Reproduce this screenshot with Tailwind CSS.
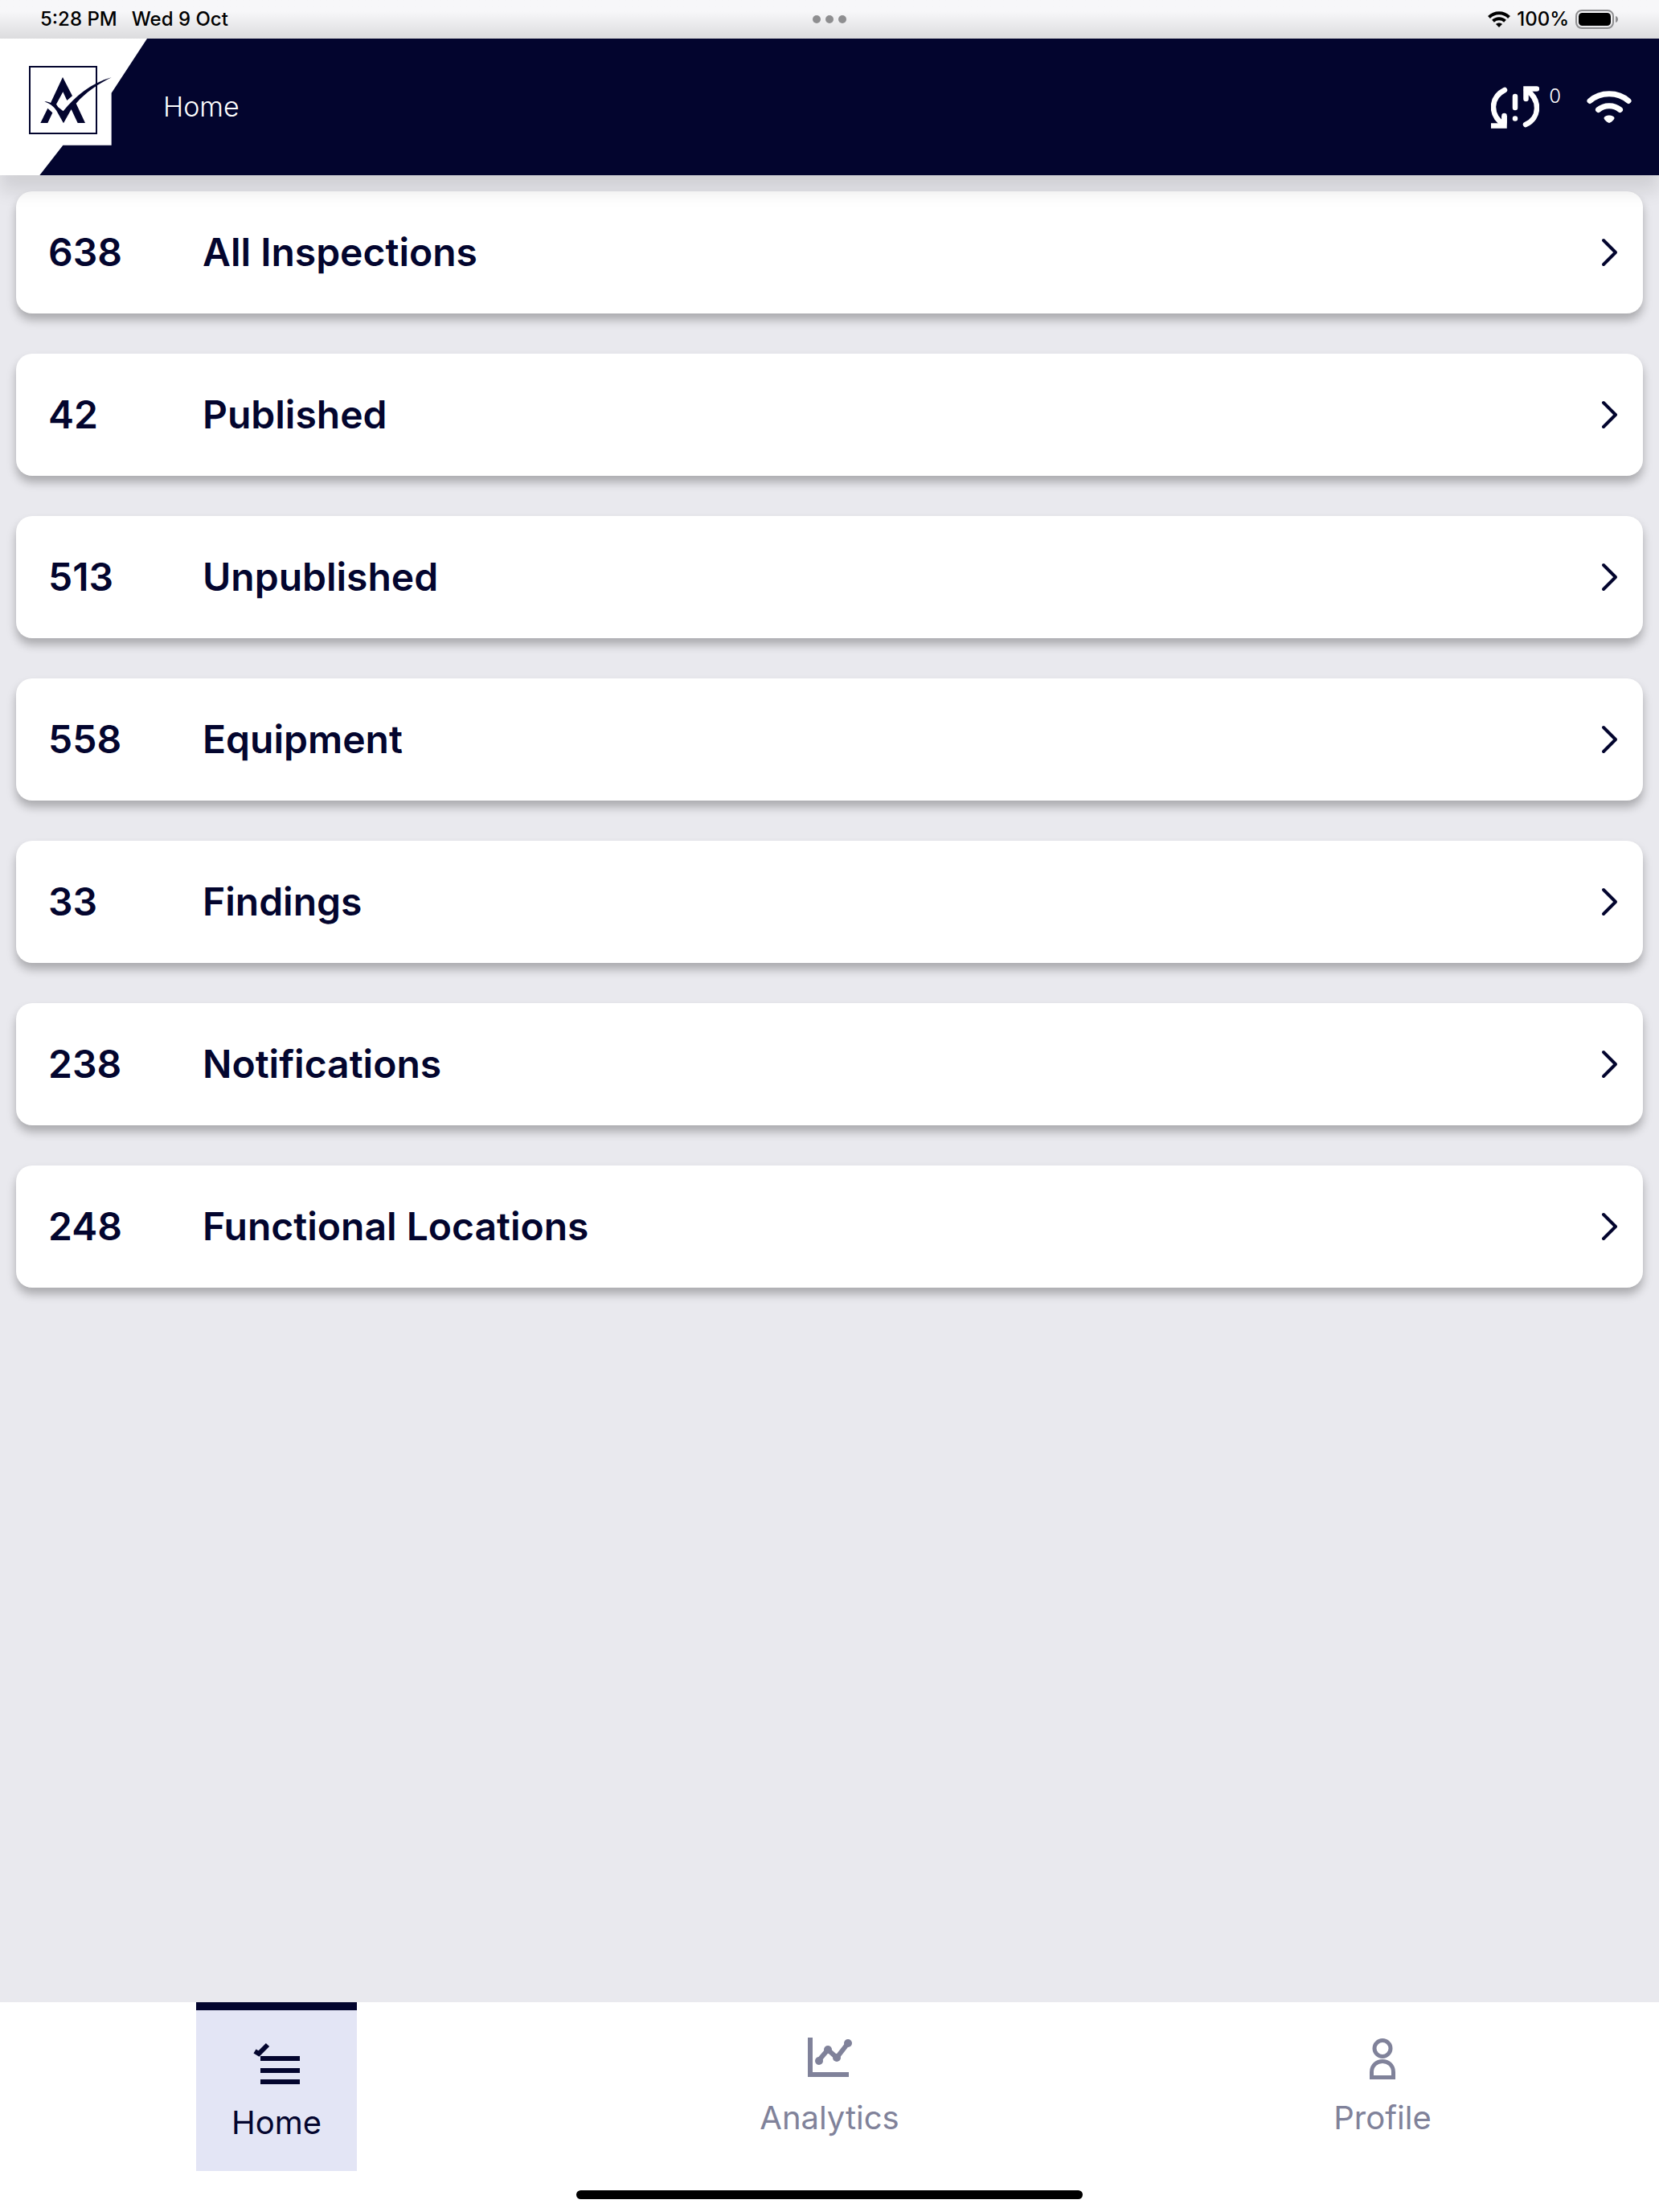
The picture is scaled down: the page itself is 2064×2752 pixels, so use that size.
<!DOCTYPE html>
<html lang="en">
<head>
    <meta charset="UTF-8">
    <meta name="viewport" content="width=device-width, initial-scale=1.0">
    <title>Home</title>
    <script src="https://cdn.jsdelivr.net/npm/@tailwindcss/browser@4"></script>
</head>
<body class="flex min-h-screen flex-col bg-[#e9e9ee] font-['Inter',sans-serif] text-[#03052e]">

    <!-- Status bar -->
    <div class="grid h-12 grid-cols-3 items-center bg-linear-to-b from-[#f7f7f9] from-30% to-[#dcdcde] px-[50px] text-2xl font-medium text-black">
        <div class="flex gap-[18px]">
            <span>5:28 PM</span>
            <span>Wed 9 Oct</span>
        </div>
        <div class="flex justify-center gap-1.5">
            <span class="size-2.5 rounded-full bg-[#8e8e90]"></span>
            <span class="size-2.5 rounded-full bg-[#8e8e90]"></span>
            <span class="size-2.5 rounded-full bg-[#8e8e90]"></span>
        </div>
        <div class="flex items-center justify-end gap-2">
            <svg class="h-5 w-7" viewBox="0 0 28 20" fill="none" stroke="black" stroke-width="4">
                <path d="M1.5 7.5C8.5 .5 19.5 .5 26.5 7.5M6.500 12.200C10.700 8.200 17.300 8.200 21.500 12.200"/>
                <path d="M10 16C12.300 14 15.700 14 18 16L14 20Z" fill="black" stroke="none"/>
            </svg>
            <span>100%</span>
            <svg class="h-6 w-[54px]" viewBox="0 0 54 24">
                <rect x="1" y="1" width="46" height="22" rx="7" fill="none" stroke="#8e8e90" stroke-width="2"/>
                <rect x="4" y="4" width="40" height="16" rx="4.500" fill="black"/>
                <path d="M50 8C54 9 54 15 50 16Z" fill="#8e8e90"/>
            </svg>
        </div>
    </div>

    <!-- Header -->
    <header class="relative z-10 flex h-[170px] items-center bg-[#03052e] pr-[34px] text-white shadow-[0_20px_20px_rgba(0,0,0,0.1)]">
        <svg class="h-[170px] w-[183px]" viewBox="0 144 549 510">
            <path d="M0 144H549L416 347V542H235L148 654H0Z" fill="white"/>
            <rect x="111" y="249" width="249" height="249" fill="none" stroke="#03052e" stroke-width="6"/>
            <g fill="#03052e">
                <path d="M234 288L270 358L250 375L235 343L210 389L217 400L236 415C280 360 340 310 416 289C365 314 320 345 284 386L318 459H290L266 408L237 460L211 413C200 397 188 388 166 379C174 379 182 381 189 384Z"/>
                <path d="M178 404L196 421L178 459H151Z"/>
            </g>
        </svg>
        <h1 class="ml-5 text-[34px] leading-10 font-light">Home</h1>
        <div class="ml-auto flex items-center">
            <button type="button" class="flex items-start" aria-label="Sync">
                <svg class="h-[54px] w-[60px]" viewBox="0 0 60 54" fill="none" stroke="white" stroke-width="6.500" stroke-linecap="round">
                    <path d="M17 6C-1 15 -2 37 16 49"/>
                    <path d="M16.500 38V50.500H0" stroke-linecap="butt"/>
                    <path d="M16.500 38V46"/>
                    <path d="M43 49C61 41 62 18 44 6"/>
                    <path d="M43.500 17V4.500H57"/>
                    <path d="M30 14V28M30 41.500V41.600"/>
                </svg>
                <span class="ml-3 text-2xl leading-7 font-light">0</span>
            </button>
            <svg class="ml-8 h-10 w-14" viewBox="0 0 56 40" fill="none" stroke="white" stroke-width="7" stroke-linecap="round">
                <path d="M4 12.500C17 .7 39 .7 52 12.500M14.500 23.500C22 17 34 17 41.500 23.500"/>
                <path d="M28 30.500C31 30.500 34.500 32 34.500 34C34.500 36 29.500 40 28 40S21.500 36 21.500 34C21.500 32 25 30.500 28 30.500Z" fill="white" stroke="none"/>
            </svg>
        </div>
    </header>

    <main class="flex-1 p-5">
        <nav class="flex flex-col gap-[50px] text-5xl font-semibold" aria-label="Inspections">
            <a href="#" class="flex h-[152px] items-center rounded-[20px] bg-white pr-[30px] pl-10 shadow-[0_8px_12px_rgba(0,0,0,0.27)]">
                <span class="w-48">638</span>
                <span class="flex-1">All Inspections</span>
                <svg class="h-9 w-[22px]" viewBox="0 0 22 36" fill="none" stroke="#03052e" stroke-width="4" stroke-linecap="round" stroke-linejoin="round"><path d="M3 3L18 18L3 33"/></svg>
            </a>
            <a href="#" class="flex h-[152px] items-center rounded-[20px] bg-white pr-[30px] pl-10 shadow-[0_8px_12px_rgba(0,0,0,0.27)]">
                <span class="w-48">42</span>
                <span class="flex-1">Published</span>
                <svg class="h-9 w-[22px]" viewBox="0 0 22 36" fill="none" stroke="#03052e" stroke-width="4" stroke-linecap="round" stroke-linejoin="round"><path d="M3 3L18 18L3 33"/></svg>
            </a>
            <a href="#" class="flex h-[152px] items-center rounded-[20px] bg-white pr-[30px] pl-10 shadow-[0_8px_12px_rgba(0,0,0,0.27)]">
                <span class="w-48">513</span>
                <span class="flex-1">Unpublished</span>
                <svg class="h-9 w-[22px]" viewBox="0 0 22 36" fill="none" stroke="#03052e" stroke-width="4" stroke-linecap="round" stroke-linejoin="round"><path d="M3 3L18 18L3 33"/></svg>
            </a>
            <a href="#" class="flex h-[152px] items-center rounded-[20px] bg-white pr-[30px] pl-10 shadow-[0_8px_12px_rgba(0,0,0,0.27)]">
                <span class="w-48">558</span>
                <span class="flex-1">Equipment</span>
                <svg class="h-9 w-[22px]" viewBox="0 0 22 36" fill="none" stroke="#03052e" stroke-width="4" stroke-linecap="round" stroke-linejoin="round"><path d="M3 3L18 18L3 33"/></svg>
            </a>
            <a href="#" class="flex h-[152px] items-center rounded-[20px] bg-white pr-[30px] pl-10 shadow-[0_8px_12px_rgba(0,0,0,0.27)]">
                <span class="w-48">33</span>
                <span class="flex-1">Findings</span>
                <svg class="h-9 w-[22px]" viewBox="0 0 22 36" fill="none" stroke="#03052e" stroke-width="4" stroke-linecap="round" stroke-linejoin="round"><path d="M3 3L18 18L3 33"/></svg>
            </a>
            <a href="#" class="flex h-[152px] items-center rounded-[20px] bg-white pr-[30px] pl-10 shadow-[0_8px_12px_rgba(0,0,0,0.27)]">
                <span class="w-48">238</span>
                <span class="flex-1">Notifications</span>
                <svg class="h-9 w-[22px]" viewBox="0 0 22 36" fill="none" stroke="#03052e" stroke-width="4" stroke-linecap="round" stroke-linejoin="round"><path d="M3 3L18 18L3 33"/></svg>
            </a>
            <a href="#" class="flex h-[152px] items-center rounded-[20px] bg-white pr-[30px] pl-10 shadow-[0_8px_12px_rgba(0,0,0,0.27)]">
                <span class="w-48">248</span>
                <span class="flex-1">Functional Locations</span>
                <svg class="h-9 w-[22px]" viewBox="0 0 22 36" fill="none" stroke="#03052e" stroke-width="4" stroke-linecap="round" stroke-linejoin="round"><path d="M3 3L18 18L3 33"/></svg>
            </a>
        </nav>
    </main>

    <!-- Bottom tabs -->
    <footer class="bg-white pb-4">
        <nav class="grid grid-cols-3 justify-items-center text-[40px] leading-12 text-[#80829a]" aria-label="Main">
            <a href="#" aria-current="page" class="flex h-[210px] w-[200px] flex-col items-center gap-6 border-t-10 border-[#03052e] bg-[#e3e5f5] pt-10 text-[#03052e]">
                <svg class="h-[52px] w-[58px]" viewBox="0 1 58 52" fill="none" stroke="#03052e" stroke-width="6">
                    <path d="M9 21H58M9 36H58M9 50H58"/>
                    <path d="M2 12L7 15L18 4"/>
                </svg>
                <span>Home</span>
            </a>
            <a href="#" class="flex flex-col items-center gap-6 pt-11">
                <svg class="h-[52px] w-14" viewBox="0 0 56 52" fill="none" stroke="#80829a" stroke-width="6">
                    <path d="M4 0V46H52"/>
                    <path d="M15 28L26 15L37 25L51 7" stroke-width="6"/>
                    <g fill="#80829a" stroke="none">
                        <circle cx="15" cy="29" r="5"/>
                        <circle cx="26" cy="15" r="5"/>
                        <circle cx="37" cy="25" r="5"/>
                        <circle cx="51" cy="7" r="5"/>
                    </g>
                </svg>
                <span>Analytics</span>
            </a>
            <a href="#" class="flex flex-col items-center gap-6 pt-11">
                <svg class="h-[52px] w-8" viewBox="0 0 32 52" fill="none" stroke="#80829a" stroke-width="5">
                    <circle cx="16" cy="13.500" r="10"/>
                    <path d="M2.500 49.500V43C2.500 25 29.500 25 29.500 43V49.500Z"/>
                </svg>
                <span>Profile</span>
            </a>
        </nav>
        <div class="mx-auto mt-6 h-[11px] w-[630px] rounded-full bg-black"></div>
    </footer>
</body>
</html>
